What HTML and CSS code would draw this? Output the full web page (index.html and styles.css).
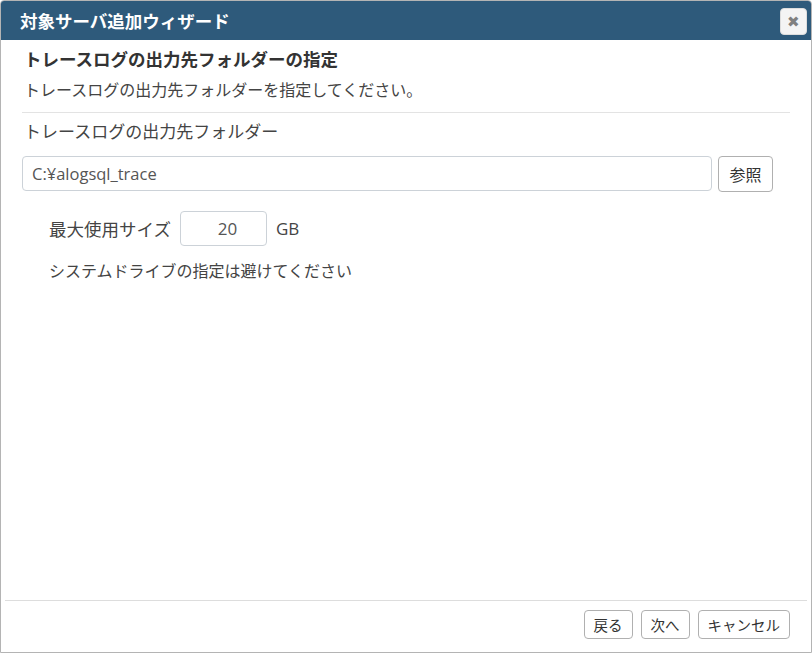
FILE: index.html
```html
<!DOCTYPE html>
<html lang="ja">

<head>
    <meta charset="UTF-8">
    <meta name="viewport" content="width=device-width, initial-scale=1.0">
    <title>対象サーバ追加ウィザード</title>
    <link rel="stylesheet" href="styles.css">
</head>

<body>
    <div class="dialog">
        <div class="dialog_title">
            <span>対象サーバ追加ウィザード</span>
            <button class="btn_close">&#x2716;</button>
        </div>

        <div class="dialog_body">
            <h2 class="step_title">トレースログの出力先フォルダーの指定</h2>
            <p class="step_desc">トレースログの出力先フォルダーを指定してください。</p>

            <div class="field_label">トレースログの出力先フォルダー</div>
            <div class="folder_row">
                <input class="txt folder_txt" type="text" value="C:¥alogsql_trace">
                <button class="btn btn_ref">参照</button>
            </div>

            <div class="size_row">
                <span>最大使用サイズ</span>
                <input class="txt size_txt" type="text" value="20">
                <span class="unit">GB</span>
            </div>
            <p class="note">システムドライブの指定は避けてください</p>
        </div>

        <div class="dialog_foot">
            <button class="btn">戻る</button>
            <button class="btn">次へ</button>
            <button class="btn">キャンセル</button>
        </div>
    </div>
</body>

</html>
```

FILE: styles.css
```css
* {
    margin: 0;
    padding: 0;
    box-sizing: border-box;
}

body {
    font-family: "Noto Sans CJK JP", "Noto Sans", sans-serif;
    color: #333;
    background-color: #fff;
}

.dialog {
    width: 812px;
    height: 653px;
    border: 1px solid #b4b4b4;
    border-radius: 4px 4px 0 0;
    display: flex;
    flex-direction: column;
}

.dialog_title {
    height: 39px;
    background-color: #2e5a7b;
    color: #fff;
    display: flex;
    align-items: center;
    justify-content: space-between;
    padding: 0 4px 0 19px;
    font-size: 17.5px;
    font-weight: bold;
    border-radius: 3px 3px 0 0;
}

.btn_close {
    width: 27px;
    height: 27px;
    border: 1px solid #ddd;
    border-radius: 4px;
    background-color: #f4f4f4;
    color: #808080;
    font-size: 15px;
    line-height: 25px;
    margin-top: 2px;
}

.dialog_body {
    flex: 1;
    padding: 0 21px;
}

.step_title {
    font-size: 17.5px;
    font-weight: bold;
    line-height: 24px;
    margin-top: 7px;
    padding-left: 2px;
}

.step_desc {
    font-size: 16px;
    color: #444;
    line-height: 24px;
    margin-top: 6px;
    padding: 0 0 11px 2px;
    border-bottom: 1px solid #e3e3e3;
}

.field_label {
    font-size: 17px;
    color: #444;
    line-height: 24px;
    margin-top: 6px;
    padding-left: 2px;
}

.folder_row {
    display: flex;
    margin-top: 13px;
    gap: 6px;
}

.txt {
    height: 35px;
    border: 1px solid #ccd2d8;
    border-radius: 4px;
    font-family: "Open Sans", "Noto Sans CJK JP", sans-serif;
    font-size: 16.5px;
    color: #555;
    padding: 0 9px;
}

.folder_txt {
    width: 690px;
}

.btn {
    font-family: "Noto Sans CJK JP", sans-serif;
    background-color: #fff;
    border: 1px solid #b0b0b0;
    border-radius: 4px;
    color: #333;
}

.btn_ref {
    width: 55px;
    height: 36px;
    font-size: 16px;
}

.size_row {
    display: flex;
    align-items: center;
    margin: 19px 0 0 27px;
    font-size: 17.5px;
    color: #444;
}

.size_txt {
    width: 87px;
    height: 35px;
    text-align: center;
    font-size: 17px;
    padding: 0 4px 0 12px;
    margin: 0 9px 0 9px;
}

.unit {
    font-family: "Open Sans", sans-serif;
    font-size: 17px;
}

.note {
    font-size: 16px;
    color: #444;
    margin: 12px 0 0 27px;
}

.dialog_foot {
    margin: 0 4px;
    border-top: 1px solid #ddd;
    height: 52px;
    display: flex;
    justify-content: flex-end;
    align-items: flex-start;
    gap: 8px;
    padding: 9px 17px 0 0;
}

.dialog_foot .btn {
    height: 29px;
    font-size: 14.5px;
    padding: 0 9px;
}
```
